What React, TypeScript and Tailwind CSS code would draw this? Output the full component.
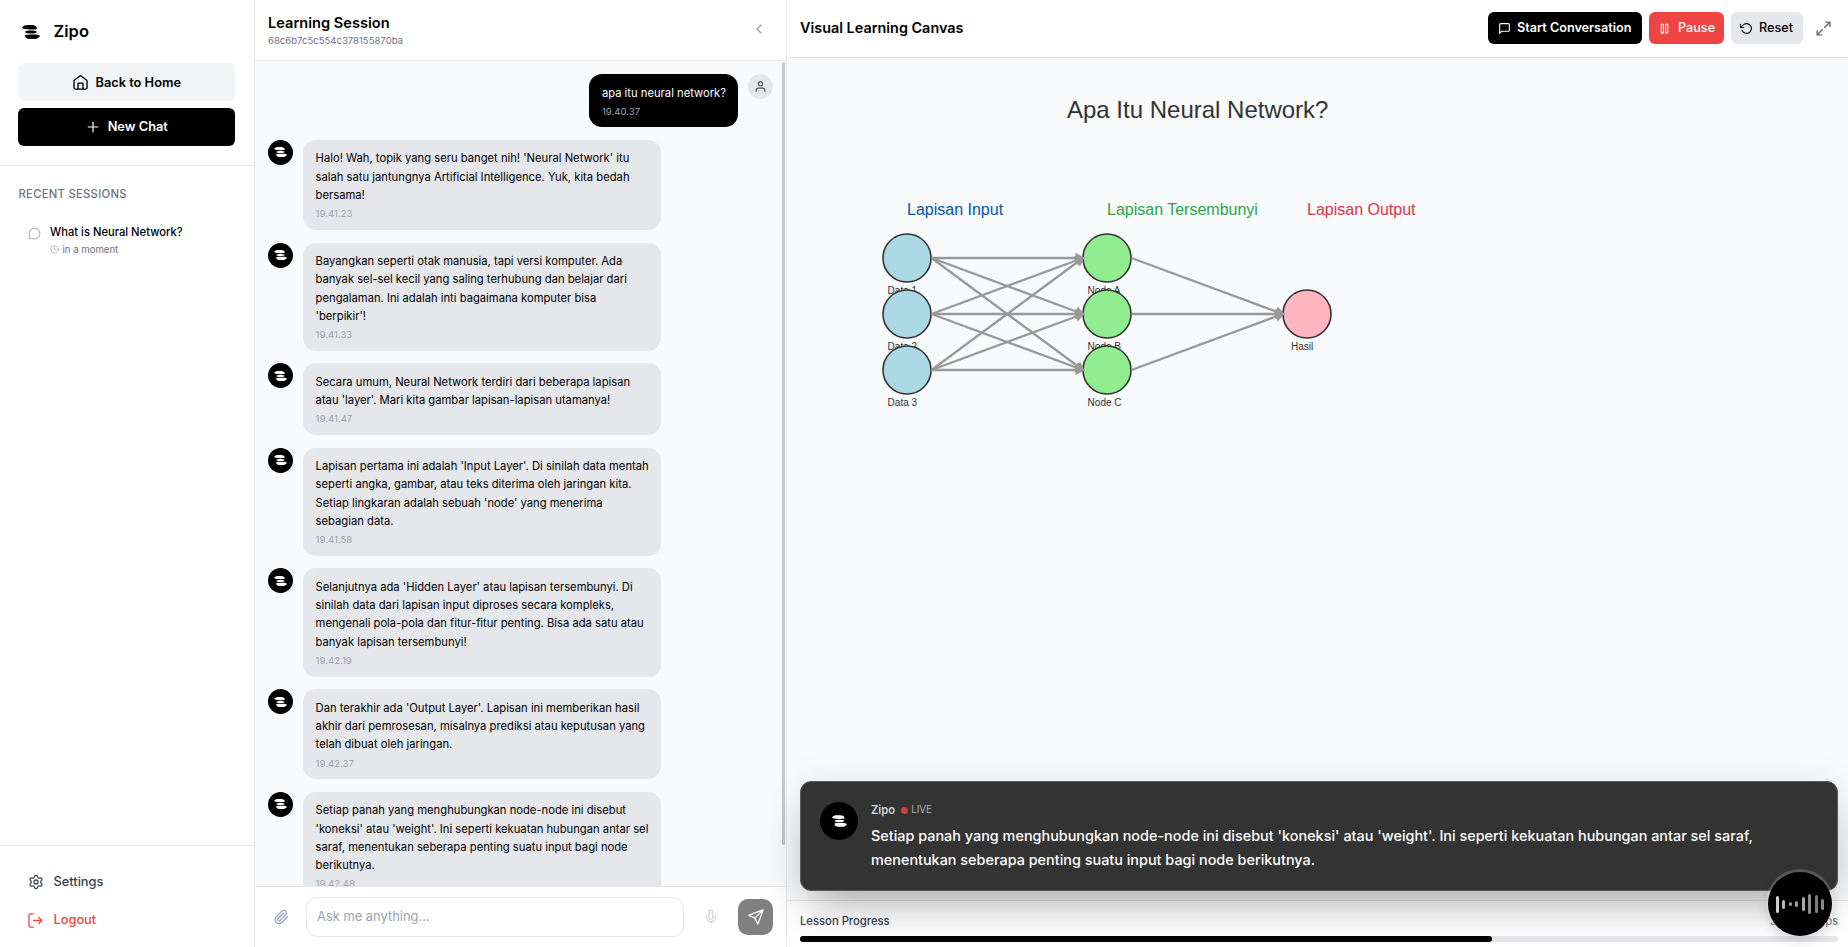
import type { ReactNode } from "react";
import { ChevronLeft, MessageCircle, Clock, Settings, Paperclip, Mic, Plus } from "lucide-react";
import { FiMessageSquare, FiRotateCcw, FiPause, FiUser } from "react-icons/fi";

function Logo({ className }: { className: string }) {
  return (
    <svg viewBox="0 0 36 28" className={className} fill="currentColor">
      <path d="M0 5.200C2.500 1.500 7 0 12 0h8c6 0 9.500 2.500 10.200 7.800C24 9.300 13 9 8.500 8.600 4 8.200 1 7.300 0 5.200z" />
      <path d="M5.500 14C8 11.800 12 11.200 18 11.200s10 .7 12 2.800c-2 2.400-6 3-12 3S7.500 16.200 5.500 14z" />
      <path d="M5.800 20.200c4-.9 7-1.200 11-1.200h8c5 0 10 .3 11 3.300C33 26.500 29 28 23 28h-8c-5.500 0-9.200-2.500-9.200-7.800z" />
    </svg>
  );
}

function HomeIcon() {
  return (
    <svg viewBox="0 0 24 24" className="size-[17px]" fill="none" stroke="currentColor" strokeWidth="1.900" strokeLinejoin="round" strokeLinecap="round">
      <path d="M2.800 9.200 12 2.200l9.200 7V19a2.300 2.300 0 0 1-2.300 2.300H5.100A2.300 2.300 0 0 1 2.800 19z" />
      <path d="M8.500 21v-8.200h7V21" />
    </svg>
  );
}

function LogoutIcon() {
  return (
    <svg viewBox="0 0 24 24" className="size-[15px]" fill="none" stroke="currentColor" strokeWidth="2.100" strokeLinejoin="round" strokeLinecap="round">
      <path d="M8.500 1.500H4a2.500 2.500 0 0 0-2.500 2.500v16A2.500 2.500 0 0 0 4 22.500h4.500" />
      <path d="M9 12h13M17 7l5 5-5 5" />
    </svg>
  );
}

function ExpandIcon() {
  return (
    <svg viewBox="0 0 24 24" className="ml-[5px] size-[17px] text-[#6b7280]" fill="none" stroke="currentColor" strokeWidth="2" strokeLinejoin="round" strokeLinecap="round">
      <path d="M15 3h6v6M21 3l-7.500 7.500M9 21H3v-6M3 21l7.500-7.500" />
    </svg>
  );
}

function SendIcon() {
  return (
    <svg viewBox="0 0 24 24" className="size-[18px]" fill="none" stroke="currentColor" strokeWidth="1.700" strokeLinejoin="round" strokeLinecap="round">
      <path d="M21.500 2.500 2.500 9.500l8 4 4 8zM21.500 2.500l-11 11" />
    </svg>
  );
}

const messages = [
  { time: "19.41.23", text: "Halo! Wah, topik yang seru banget nih! 'Neural Network' itu salah satu jantungnya Artificial Intelligence. Yuk, kita bedah bersama!" },
  { time: "19.41.33", text: "Bayangkan seperti otak manusia, tapi versi komputer. Ada banyak sel-sel kecil yang saling terhubung dan belajar dari pengalaman. Ini adalah inti bagaimana komputer bisa 'berpikir'!" },
  { time: "19.41.47", text: "Secara umum, Neural Network terdiri dari beberapa lapisan atau 'layer'. Mari kita gambar lapisan-lapisan utamanya!" },
  { time: "19.41.58", text: "Lapisan pertama ini adalah 'Input Layer'. Di sinilah data mentah seperti angka, gambar, atau teks diterima oleh jaringan kita. Setiap lingkaran adalah sebuah 'node' yang menerima sebagian data." },
  { time: "19.42.19", text: "Selanjutnya ada 'Hidden Layer' atau lapisan tersembunyi. Di sinilah data dari lapisan input diproses secara kompleks, mengenali pola-pola dan fitur-fitur penting. Bisa ada satu atau banyak lapisan tersembunyi!" },
  { time: "19.42.37", text: "Dan terakhir ada 'Output Layer'. Lapisan ini memberikan hasil akhir dari pemrosesan, misalnya prediksi atau keputusan yang telah dibuat oleh jaringan." },
  { time: "19.42.48", text: "Setiap panah yang menghubungkan node-node ini disebut 'koneksi' atau 'weight'. Ini seperti kekuatan hubungan antar sel saraf, menentukan seberapa penting suatu input bagi node berikutnya." },
];

function Sidebar() {
  return (
    <aside className="flex w-[255px] shrink-0 flex-col border-r border-gray-200 bg-white">
      <div className="flex h-[166px] flex-col border-b border-gray-200 pt-[18px] pr-[19px] pl-[18px]">
        <div className="flex h-[27px] items-center gap-[13.500px] pl-1">
          <Logo className="h-[14px] w-[18px]" />
          <span className="text-[16.500px] font-semibold">Zipo</span>
        </div>
        <button className="mt-[18px] flex h-[38px] items-center justify-center gap-[6.500px] rounded-md bg-[#f3f4f6] pt-[1px] text-[12.800px] font-semibold">
          <HomeIcon />
          Back to Home
        </button>
        <button className="mt-[7px] flex h-[38px] items-center justify-center gap-[6.500px] rounded-md bg-black text-[12.800px] font-semibold text-white">
          <Plus className="size-[16px]" strokeWidth={1.8} />
          New Chat
        </button>
      </div>
      <div className="flex-1 pt-[20px] pr-[18px] pl-[18.500px]">
        <h2 className="text-[11.250px] leading-4 font-medium tracking-[0.280px] text-[#6b7280]">RECENT SESSIONS</h2>
        <div className="mt-[22px] flex gap-[9.500px] pl-[9px]">
          <MessageCircle className="mt-[3px] size-[13px] text-[#9ca3af]" strokeWidth={1.8} />
          <div>
            <p className="text-[11.200px] leading-4 font-medium">What is Neural Network?</p>
            <p className="mt-[2.500px] flex items-center gap-[3.500px] text-[9.600px] leading-[14px] text-[#6b7280]">
              <Clock className="size-[9px] text-[#9ca3af]" strokeWidth={1.8} />
              in a moment
            </p>
          </div>
        </div>
      </div>
      <div className="h-[102px] border-t border-gray-200 pt-[17px] pl-[28px] text-[12.800px] font-medium">
        <div className="flex h-[38px] items-center gap-[9.500px] text-[#374151]">
          <Settings className="size-[16px]" strokeWidth={1.9} />
          Settings
        </div>
        <div className="flex h-[38px] items-center gap-[10.500px] text-[#ef4444]">
          <LogoutIcon />
          Logout
        </div>
      </div>
    </aside>
  );
}

function Bubble({ text, time, className, timeClassName }: { text: string; time: string; className: string; timeClassName: string }) {
  return (
    <div className={"rounded-[13px] pt-[9.500px] pr-[12px] pb-[9px] pl-[12.600px] " + className}>
      <p className="text-[11.220px] leading-[18.280px]">{text}</p>
      <p className={"mt-[3.100px] text-[9.600px] leading-[13.500px] " + timeClassName}>{time}</p>
    </div>
  );
}

function ChatPanel() {
  return (
    <section className="flex w-[532px] shrink-0 flex-col border-r border-gray-200 bg-white">
      <header className="flex h-[61px] items-center justify-between border-b border-gray-200 pr-[19px] pl-[13px]">
        <div>
          <h1 className="text-[14.600px] leading-5 font-semibold">Learning Session</h1>
          <p className="text-[9.550px] leading-[15px] text-[#6b7280]">68c6b7c5c554c378155870ba</p>
        </div>
        <ChevronLeft className="-mt-[2px] size-[16px] text-[#9ca3af]" />
      </header>
      <div className="flex min-h-0 flex-1 overflow-hidden bg-[#f9fafb]">
        <div className="flex min-w-0 flex-1 flex-col gap-[12.600px] pt-[13px] pr-[9px] pl-[13px]">
          <div className="flex shrink-0 items-start justify-end gap-[10px]">
            <Bubble text="apa itu neural network?" time="19.40.37" className="bg-black text-white" timeClassName="text-[#9ca3af]" />
            <div className="flex size-[25px] items-center justify-center rounded-full bg-[#e5e7eb] text-[#4b5563]">
              <FiUser className="size-[13px]" />
            </div>
          </div>
          {messages.map((m) => (
            <div key={m.time} className="flex shrink-0 items-start gap-[10px]">
              <div className="flex size-[25px] shrink-0 items-center justify-center rounded-full bg-black text-white">
                <Logo className="h-[10px] w-[13px]" />
              </div>
              <Bubble text={m.text} time={m.time} className="w-[358px] bg-[#e5e7eb]" timeClassName="text-[#9ca3af]" />
            </div>
          ))}
        </div>
        <div className="mt-[1px] mr-[1px] h-[783px] w-[3px] shrink-0 rounded-full bg-[#c8c8c8]" />
      </div>
      <footer className="flex h-[61px] shrink-0 items-center border-t border-gray-200 pr-[12.600px] pl-[18px]">
        <Paperclip className="size-[16px] text-[#94a3b8]" strokeWidth={1.8} />
        <div className="ml-[17px] flex h-[40px] w-[378px] items-center rounded-[11px] border border-gray-200 px-[10px] text-[12.900px] text-[#9ca3af]">Ask me anything...</div>
        <Mic className="ml-[19px] size-[16px] text-[#d1d5db]" />
        <button className="ml-auto flex h-[36px] w-[35px] items-center justify-center rounded-[10px] bg-[#808080] text-white">
          <SendIcon />
        </button>
      </footer>
    </section>
  );
}

type Node = { x: number; y: number; fill: string; label: string };

const inputs: Node[] = [
  { x: 120, y: 200, fill: "#add8e6", label: "Data 1" },
  { x: 120, y: 256, fill: "#add8e6", label: "Data 2" },
  { x: 120, y: 312, fill: "#add8e6", label: "Data 3" },
];
const hidden: Node[] = [
  { x: 320, y: 200, fill: "#90ee90", label: "Node A" },
  { x: 320, y: 256, fill: "#90ee90", label: "Node B" },
  { x: 320, y: 312, fill: "#90ee90", label: "Node C" },
];
const output: Node = { x: 520, y: 256, fill: "#ffb6c1", label: "Hasil" };

function Arrow({ from, to }: { from: Node; to: Node }) {
  return <line x1={from.x + 24.5} y1={from.y} x2={to.x - 24} y2={to.y} stroke="#999" strokeWidth="2.300" markerEnd="url(#head)" />;
}

function Diagram() {
  return (
    <svg width="1061" height="842" className="block font-['Liberation_Sans',Arial,sans-serif]">
      <defs>
        <marker id="head" markerUnits="userSpaceOnUse" markerWidth="14" markerHeight="14" refX="9" refY="7" orient="auto">
          <path d="M2.500 3.500 9 7 2.500 10.500z" fill="#999" stroke="#999" strokeWidth="2" />
        </marker>
      </defs>
      <text x="280" y="60" fontSize="24" fill="#333">Apa Itu Neural Network?</text>
      <text x="120" y="157" fontSize="16" fill="#0056b3">Lapisan Input</text>
      <text x="320" y="157" fontSize="16" fill="#28a745">Lapisan Tersembunyi</text>
      <text x="520" y="157" fontSize="16" fill="#dc3545">Lapisan Output</text>
      {[...inputs, ...hidden, output].map((n) => (
        <g key={n.label}>
          <circle cx={n.x} cy={n.y} r="24" fill={n.fill} stroke="#333" strokeWidth="1.600" />
          <text x={n.label === "Hasil" ? n.x - 16 : n.x - 19.4} y={n.y + 35.500} fontSize="10" fill="#333">{n.label}</text>
        </g>
      ))}
      {inputs.flatMap((a) => hidden.map((b) => <Arrow key={a.label + b.label} from={a} to={b} />))}
      {hidden.map((a) => <Arrow key={a.label} from={a} to={output} />)}
    </svg>
  );
}

function ToolButton({ className, children }: { className: string; children: ReactNode }) {
  return <button className={"flex h-[32px] items-center rounded-md text-[12.650px] font-medium " + className}>{children}</button>;
}

const wave = [
  { h: 17, c: "#cfcfcf" }, { h: 9, c: "#b5b5b5" }, { h: 4, c: "#9a9a9a" }, { h: 6, c: "#9a9a9a" },
  { h: 14, c: "#aaaaaa" }, { h: 20, c: "#8c8c8c" }, { h: 18, c: "#7d7d7d" }, { h: 11, c: "#8a8a8a" },
];

function CanvasPanel() {
  return (
    <main className="relative flex min-w-0 flex-1 flex-col bg-white">
      <header className="flex h-[58px] shrink-0 items-center border-b border-slate-200 pr-[16px] pb-[1px] pl-[13px]">
        <h1 className="text-[14.400px] font-semibold">Visual Learning Canvas</h1>
        <div className="ml-auto flex items-center gap-[7px]">
          <ToolButton className="w-[154px] gap-[6px] bg-black pl-[10px] font-semibold text-white"><FiMessageSquare className="size-[13px]" />Start Conversation</ToolButton>
          <ToolButton className="w-[75px] gap-[7px] bg-[#ef4444] pl-[9px] text-white"><FiPause className="size-[13px]" />Pause</ToolButton>
          <ToolButton className="w-[72px] gap-[6px] bg-[#e5e7eb] pl-[9px] text-black"><FiRotateCcw className="size-[13px]" />Reset</ToolButton>
          <ExpandIcon />
        </div>
      </header>
      <div className="min-h-0 flex-1 overflow-hidden bg-[#f9fafb]">
        <Diagram />
      </div>
      <footer className="h-[47px] shrink-0 border-t border-gray-200 pt-[12px] pr-[10px] pl-[13px]">
        <div className="flex justify-between text-[11.250px] leading-4">
          <span className="font-medium text-[#374151]">Lesson Progress</span>
          <span className="text-[11px] text-[#6b7280]">38 / 57 steps</span>
        </div>
        <div className="mt-[7px] h-[6px] rounded-full bg-gray-200">
          <div className="h-full w-[66.670%] rounded-full bg-black" />
        </div>
      </footer>
      <div className="absolute top-[781px] right-[10px] left-[13px] flex h-[110px] gap-[13px] rounded-[11px] border border-[#5b5b5b] bg-[#333] pt-[20px] pl-[19px] shadow-[0_22px_45px_-10px_rgba(0,0,0,0.300),0_0_40px_rgba(0,0,0,0.060)]">
        <div className="flex size-[38px] items-center justify-center rounded-full bg-black text-white">
          <Logo className="h-[12px] w-[15px]" />
        </div>
        <div>
          <div className="flex items-center text-[11.250px] leading-4 font-semibold text-[#d1d5db]">
            Zipo
            <span className="ml-[6px] size-[7px] rounded-full bg-[#c74343]" />
            <span className="ml-[3px] text-[9.800px] font-normal text-[#b0b0b0]">LIVE</span>
          </div>
          <p className="mt-[6px] w-[920px] text-[14.410px] leading-[24px] font-medium text-white">
            Setiap panah yang menghubungkan node-node ini disebut 'koneksi' atau 'weight'. Ini seperti kekuatan hubungan antar sel saraf, menentukan seberapa penting suatu input bagi node berikutnya.
          </p>
        </div>
      </div>
      <div className="absolute top-[872px] right-[16px] flex size-[64px] items-center justify-center gap-[3.500px] rounded-full bg-black shadow-[0_-1px_0_2px_rgba(255,255,255,0.180),0_4px_12px_rgba(0,0,0,0.150)]">
        {wave.map((b, i) => (
          <span key={i} className="w-[3px] rounded-full" style={{ height: b.h, backgroundColor: b.c }} />
        ))}
      </div>
    </main>
  );
}

export default function App() {
  return (
    <div className="flex h-[947px] w-[1848px] overflow-hidden bg-white font-[Inter,sans-serif] text-black">
      <Sidebar />
      <ChatPanel />
      <CanvasPanel />
    </div>
  );
}
